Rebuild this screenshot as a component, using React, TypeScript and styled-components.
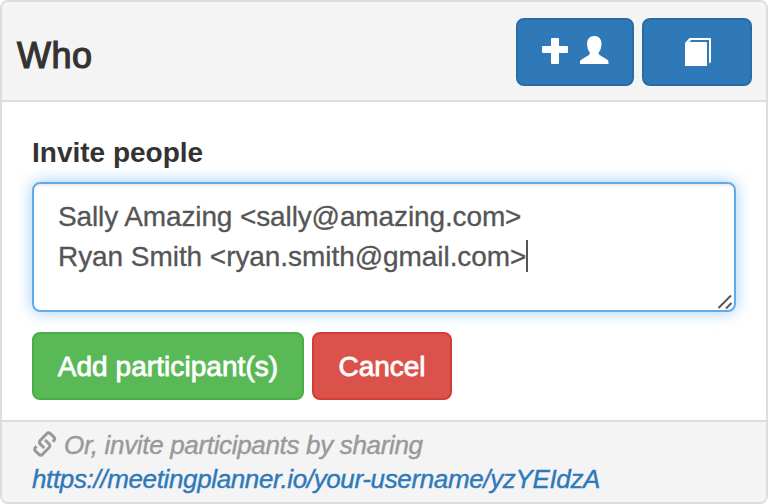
import React from "react";
import styled, { createGlobalStyle } from "styled-components";

const GlobalStyle = createGlobalStyle`
  *, *::before, *::after { box-sizing: border-box; }
  body {
    margin: 0;
    background: #fff;
    font-family: "Liberation Sans", Arial, sans-serif;
    font-size: 28px;
    line-height: 40px;
    color: #333;
    overflow: hidden;
  }
`;

const Panel = styled.section`
  width: 768px;
  height: 504px;
  display: flex;
  flex-direction: column;
  border: 2px solid #ddd;
  border-radius: 8px;
  background: #fff;
  overflow: hidden;
`;

const Header = styled.header`
  display: flex;
  align-items: flex-start;
  justify-content: space-between;
  height: 100px;
  flex: none;
  padding: 16px 14px 0;
  background: #f4f4f4;
  border-bottom: 2px solid #ddd;
`;

const Title = styled.h3`
  margin: 18px 0 0 1px;
  font-size: 36px;
  line-height: 40px;
  font-weight: 400;
  letter-spacing: 0.5px;
  -webkit-text-stroke: 1.2px #333;
`;

const Group = styled.div`
  display: flex;
  gap: 8px;
`;

const tones = {
  primary: ["#2f79b9", "#296ba7"],
  success: ["#5ab957", "#47ae45"],
  danger: ["#db524b", "#d43d36"],
};

const Button = styled.button<{ $tone: keyof typeof tones; $width: number }>`
  display: flex;
  align-items: center;
  justify-content: center;
  gap: 12px;
  width: ${({ $width }) => $width}px;
  height: 68px;
  padding: 0;
  font: inherit;
  white-space: nowrap;
  color: #fff;
  background: ${({ $tone }) => tones[$tone][0]};
  border: 2px solid ${({ $tone }) => tones[$tone][1]};
  border-radius: 8px;
`;

const ButtonText = styled.span<{ $spacing: number }>`
  padding-top: 2px;
  letter-spacing: ${({ $spacing }) => $spacing}px;
  -webkit-text-stroke: 0.8px #fff;
`;

const Icon = styled.svg`
  display: block;
  flex: none;
  fill: currentColor;
`;

const RaisedIcon = styled(Icon)`
  margin-bottom: 4px;
`;

const BookIcon = styled(Icon)`
  margin-left: 2px;
`;

const Body = styled.div`
  display: flex;
  flex-direction: column;
  flex: none;
  height: 318px;
  padding: 31px 30px 0;
`;

const Label = styled.label`
  height: 49px;
  font-weight: 700;
`;

const Field = styled.div`
  position: relative;
  height: 130px;
  flex: none;
  margin-bottom: 20px;
  padding: 13px 24px 0;
  color: #555;
  -webkit-text-stroke: 0.3px #555;
  border: 2px solid #60abec;
  border-radius: 8px;
  box-shadow: inset 0 2px 2px rgba(0, 0, 0, 0.075), 0 0 16px rgba(96, 171, 236, 0.6);
`;

const Line = styled.div<{ $spacing: number }>`
  display: flex;
  align-items: center;
  height: 40px;
  white-space: pre;
  letter-spacing: ${({ $spacing }) => $spacing}px;
`;

const Caret = styled.span`
  width: 2px;
  height: 32px;
  margin-top: -2px;
  background: #555;
`;

const Grip = styled.svg`
  position: absolute;
  right: 1px;
  bottom: 0;
`;

const Footer = styled.footer`
  flex: 1;
  padding: 6px 30px 0;
  font-size: 26px;
  line-height: 34px;
  font-style: italic;
  background: #f4f4f4;
  border-top: 2px solid #ddd;
`;

const Hint = styled.div`
  display: flex;
  align-items: center;
  gap: 7px;
  color: #999;
`;

const FooterText = styled.span<{ $spacing: number }>`
  letter-spacing: ${({ $spacing }) => $spacing}px;
  -webkit-text-stroke: 0.4px currentColor;
`;

const LinkIcon = styled(Icon)`
  margin: -3px 0 0 1px;
`;

const Share = styled.a`
  display: block;
  color: #2f79b9;
  text-decoration: none;
`;

export default function App() {
  return (
    <>
      <GlobalStyle />
      <Panel>
        <Header>
          <Title>Who</Title>
          <Group>
            <Button $tone="primary" $width={118} aria-label="Add person">
              <RaisedIcon width="26" height="28" viewBox="0 0 26 28">
                <path d="M10 2h6q1 0 1 1v7h8q1 0 1 1v5q0 1-1 1h-8v10q0 1-1 1h-6q-1 0-1-1V17H1q-1 0-1-1v-5q0-1 1-1h8V3q0-1 1-1z" />
              </RaisedIcon>
              <RaisedIcon width="29" height="28" viewBox="0 0 29 28">
                <path d="M14.300 0C18.800 0 21.500 3 21.500 7.500c0 4-1 6.500-2.500 8.500-.7 1-.4 2.300.6 2.900l7.700 4.800q1.200.8 1.200 2V28H0v-2.300q0-1.200 1.200-2l7.700-4.800c1-.6 1.300-1.900.6-2.900C8 14 7.100 11.500 7.100 7.500 7.100 3 9.800 0 14.300 0z" />
              </RaisedIcon>
            </Button>
            <Button $tone="primary" $width={110} aria-label="Address book">
              <BookIcon width="26" height="28" viewBox="0 0 26 28">
                <path d="M4.500 0H25q1 0 1 1v23l-2 1.500V2H6L4.500 4H21q1 0 1 1v23H0V5z" />
              </BookIcon>
            </Button>
          </Group>
        </Header>
        <Body>
          <Label>Invite people</Label>
          <Field role="textbox">
            <Line $spacing={-0.12}>{"Sally Amazing <sally@amazing.com>"}</Line>
            <Line $spacing={-0.06}>{"Ryan Smith <ryan.smith@gmail.com>"}<Caret /></Line>
            <Grip width="16" height="16" viewBox="0 0 16 16" fill="none" stroke="#555" strokeWidth="2">
              <path d="M1.500 14 14 1.500M9 14.500l5.500-5.500" />
            </Grip>
          </Field>
          <Group>
            <Button $tone="success" $width={272}><ButtonText $spacing={0.06}>Add participant(s)</ButtonText></Button>
            <Button $tone="danger" $width={140}><ButtonText $spacing={0}>Cancel</ButtonText></Button>
          </Group>
        </Body>
        <Footer>
          <Hint>
            <LinkIcon width="24" height="26" viewBox="0 0 24 26">
              <path
                fill="none"
                stroke="currentColor"
                strokeWidth="3"
                d="M11.300 17 7.300 13.200Q5.600 11.200 7.200 9.400L13.700 2.700Q15.500 1 17.300 2.700L20.600 5.700Q22.600 7.700 20.900 9.600L19.800 10.800M12 9 16 12.800Q17.700 14.800 16.100 16.600L9.600 23.300Q7.800 25 6 23.300L2.700 20.300Q.9 18.300 2.400 16.400L3.500 15.200"
              />
            </LinkIcon>
            <FooterText $spacing={-0.33}>Or, invite participants by sharing</FooterText>
          </Hint>
          <Share><FooterText $spacing={-0.36}>https://meetingplanner.io/your-username/yzYEIdzA</FooterText></Share>
        </Footer>
      </Panel>
    </>
  );
}
